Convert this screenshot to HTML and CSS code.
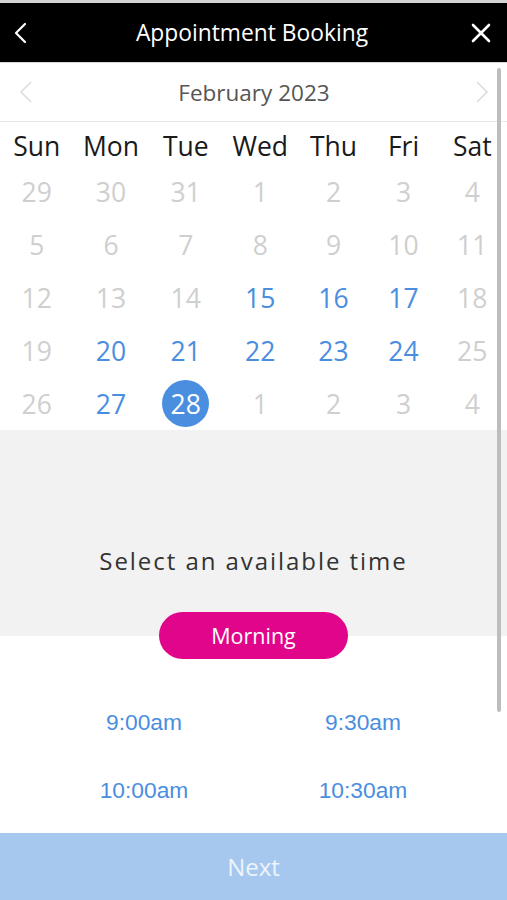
FILE: index.html
```html
<!DOCTYPE html>
<html>
<head>
<meta charset="utf-8">
<link rel="stylesheet" href="styles.css">
</head>
<body>
<div class="app">
  <div class="topstrip"></div>
  <header class="header">
    <svg class="hicon back" width="16" height="22" viewBox="0 0 16 22"><path d="M12 2 L3 11 L12 20" fill="none" stroke="#fff" stroke-width="2.2" stroke-linecap="round" stroke-linejoin="round"/></svg>
    <div class="title">Appointment Booking</div>
    <svg class="hicon close" width="20" height="20" viewBox="0 0 20 20"><path d="M2 2 L18 18 M18 2 L2 18" fill="none" stroke="#fff" stroke-width="2.6" stroke-linecap="round"/></svg>
  </header>
  <div class="month">
    <svg class="mchev" width="14" height="24" viewBox="0 0 14 24"><path d="M12 2 L2 12 L12 22" fill="none" stroke="#dcdcdc" stroke-width="1.6"/></svg>
    <div class="mtitle">February 2023</div>
    <svg class="mchev" width="14" height="24" viewBox="0 0 14 24"><path d="M2 2 L12 12 L2 22" fill="none" stroke="#dcdcdc" stroke-width="1.6"/></svg>
  </div>
  <div class="cal">
    <div class="wd">Sun</div><div class="wd">Mon</div><div class="wd">Tue</div><div class="wd">Wed</div><div class="wd">Thu</div><div class="wd">Fri</div><div class="wd">Sat</div>

    <div class="d off">29</div><div class="d off">30</div><div class="d off">31</div><div class="d off">1</div><div class="d off">2</div><div class="d off">3</div><div class="d off">4</div>
    <div class="d off">5</div><div class="d off">6</div><div class="d off">7</div><div class="d off">8</div><div class="d off">9</div><div class="d off">10</div><div class="d off">11</div>
    <div class="d off">12</div><div class="d off">13</div><div class="d off">14</div><div class="d on">15</div><div class="d on">16</div><div class="d on">17</div><div class="d off">18</div>
    <div class="d off">19</div><div class="d on">20</div><div class="d on">21</div><div class="d on">22</div><div class="d on">23</div><div class="d on">24</div><div class="d off">25</div>
    <div class="d off">26</div><div class="d on">27</div><div class="d"><span class="sel">28</span></div><div class="d off">1</div><div class="d off">2</div><div class="d off">3</div><div class="d off">4</div>
  </div>
  <section class="timesec">
    <div class="prompt">Select an available time</div>
    <div class="pill">Morning</div>
  </section>
  <div class="times">
    <div class="t">9:00am</div><div class="t">9:30am</div>
    <div class="t">10:00am</div><div class="t">10:30am</div>
  </div>
  <div class="next">Next</div>
  <div class="scrollbar"></div>
</div>
</body>
</html>
```
FILE: styles.css
```css
* { box-sizing: border-box; }
html, body { margin: 0; padding: 0; background: #fff; }
body { font-family: "Open Sans", "Noto Sans", sans-serif; }
.app { position: relative; width: 507px; height: 900px; overflow: hidden; display: flex; flex-direction: column; }
.topstrip { height: 3px; background: #d4d4d4; }
.header { height: 60px; background: #000; display: flex; align-items: center; justify-content: space-between; padding: 0 16px 0 13px; border-bottom: 1px solid #d8d8d8; }
.hicon { display: block; }
.title { color: #fff; font-size: 22.8px; margin-left: 4px; }
.month { height: 59px; display: flex; align-items: center; justify-content: space-between; padding: 0 18px 0 19px; border-bottom: 1px solid #e8e8e8; }
.mtitle { color: #555; font-size: 22.5px; }
.cal { display: grid; grid-template-columns: 73.5fr 75fr 74.5fr 74.5fr 72fr 68fr 69.5fr; grid-template-rows: 44px repeat(5, 52.8px); }
.wd { font-size: 26.5px; color: #1a1a1a; text-align: center; line-height: 40px; padding-top: 4px; }
.d { font-size: 26.5px; text-align: center; display: flex; align-items: center; justify-content: center; }
.off { color: #cfcfcf; }
.on { color: #4a8ee0; }
.sel { width: 47px; height: 47px; border-radius: 50%; background: #4a8ee0; color: #fff; display: flex; align-items: center; justify-content: center; font-size: 26.5px; }
.timesec { background: linear-gradient(#f2f2f2 0, #f2f2f2 206px, #fff 206px); display: flex; flex-direction: column; align-items: center; padding-top: 114px; }
.prompt { font-size: 24px; color: #333; letter-spacing: 1.95px; line-height: 34px; }
.pill { margin-top: 34px; width: 189px; height: 47px; border-radius: 24px; background: #e0058a; color: #fff; font-size: 21.5px; display: flex; align-items: center; justify-content: center; }
.times { display: grid; grid-template-columns: 219px 219px; justify-content: center; grid-auto-rows: 68px; padding-top: 29px; }
.t { font-family: "Liberation Sans", Arial, sans-serif; font-size: 22.8px; color: #4a8ee0; text-align: center; line-height: 68px; }
.next { margin-top: auto; height: 67px; background: #a6c8ef; color: #eef4fc; font-size: 24px; display: flex; align-items: center; justify-content: center; }
.scrollbar { position: absolute; left: 497px; top: 68px; width: 4px; height: 644px; background: #bdbdbd; border-radius: 2px; }
```
